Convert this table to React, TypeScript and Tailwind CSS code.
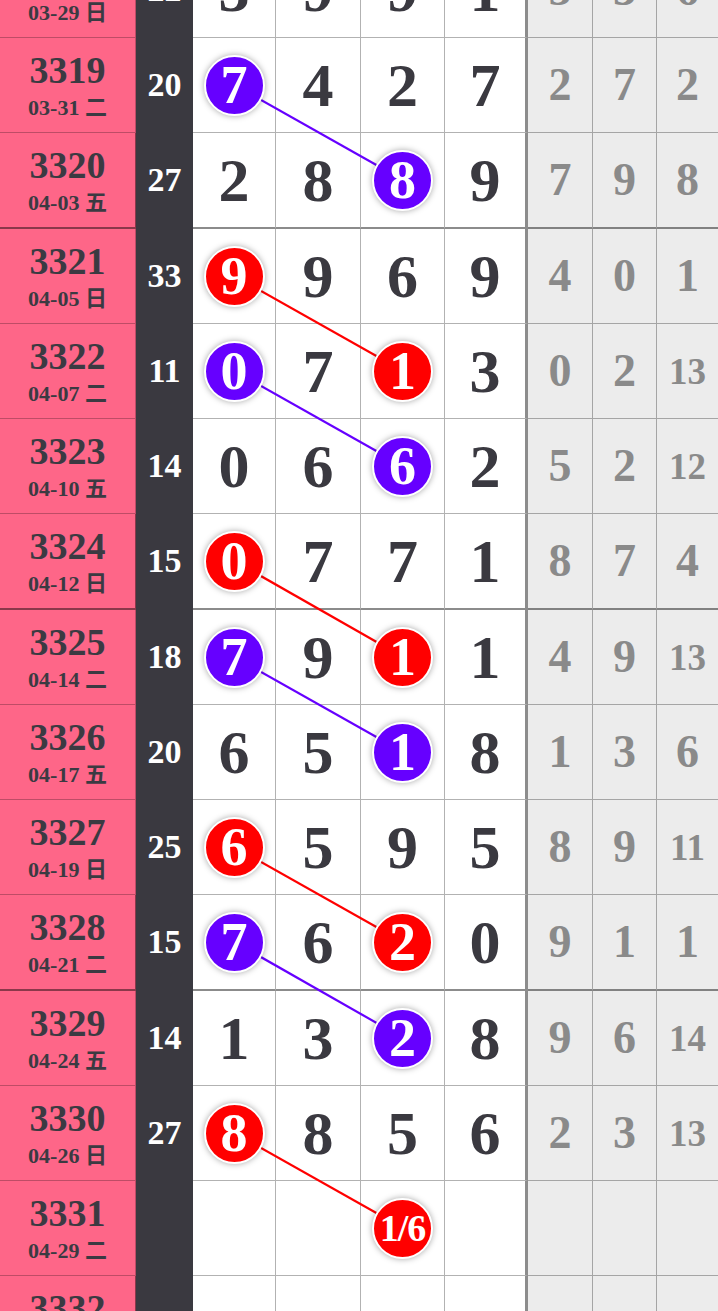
import React from 'react';

type Mark = { col: number; color: 'p' | 'r'; text?: string };
type Row = { no: string; date: string; sum: string; d: string[]; g: string[]; marks?: Mark[] };

const ROWS: Row[] = [
  { no: '3318', date: '03-29 日', sum: '22', d: ['3', '9', '9', '1'], g: ['5', '3', '6'] },
  { no: '3319', date: '03-31 二', sum: '20', d: ['7', '4', '2', '7'], g: ['2', '7', '2'], marks: [{ col: 0, color: 'p' }] },
  { no: '3320', date: '04-03 五', sum: '27', d: ['2', '8', '8', '9'], g: ['7', '9', '8'], marks: [{ col: 2, color: 'p' }] },
  { no: '3321', date: '04-05 日', sum: '33', d: ['9', '9', '6', '9'], g: ['4', '0', '1'], marks: [{ col: 0, color: 'r' }] },
  { no: '3322', date: '04-07 二', sum: '11', d: ['0', '7', '1', '3'], g: ['0', '2', '13'], marks: [{ col: 0, color: 'p' }, { col: 2, color: 'r' }] },
  { no: '3323', date: '04-10 五', sum: '14', d: ['0', '6', '6', '2'], g: ['5', '2', '12'], marks: [{ col: 2, color: 'p' }] },
  { no: '3324', date: '04-12 日', sum: '15', d: ['0', '7', '7', '1'], g: ['8', '7', '4'], marks: [{ col: 0, color: 'r' }] },
  { no: '3325', date: '04-14 二', sum: '18', d: ['7', '9', '1', '1'], g: ['4', '9', '13'], marks: [{ col: 0, color: 'p' }, { col: 2, color: 'r' }] },
  { no: '3326', date: '04-17 五', sum: '20', d: ['6', '5', '1', '8'], g: ['1', '3', '6'], marks: [{ col: 2, color: 'p' }] },
  { no: '3327', date: '04-19 日', sum: '25', d: ['6', '5', '9', '5'], g: ['8', '9', '11'], marks: [{ col: 0, color: 'r' }] },
  { no: '3328', date: '04-21 二', sum: '15', d: ['7', '6', '2', '0'], g: ['9', '1', '1'], marks: [{ col: 0, color: 'p' }, { col: 2, color: 'r' }] },
  { no: '3329', date: '04-24 五', sum: '14', d: ['1', '3', '2', '8'], g: ['9', '6', '14'], marks: [{ col: 2, color: 'p' }] },
  { no: '3330', date: '04-26 日', sum: '27', d: ['8', '8', '5', '6'], g: ['2', '3', '13'], marks: [{ col: 0, color: 'r' }] },
  { no: '3331', date: '04-29 二', sum: '', d: ['', '', '', ''], g: ['', '', ''], marks: [{ col: 2, color: 'r', text: '1/6' }] },
  { no: '3332', date: '05-01 五', sum: '', d: ['', '', '', ''], g: ['', '', ''] },
];

// links: circle in col 0 of one row to circle in col 2 of the next
const LINKS: { from: number; color: 'p' | 'r' }[] = [
  { from: 1, color: 'p' },
  { from: 3, color: 'r' },
  { from: 4, color: 'p' },
  { from: 6, color: 'r' },
  { from: 7, color: 'p' },
  { from: 9, color: 'r' },
  { from: 10, color: 'p' },
  { from: 12, color: 'r' },
];

const COL_X = [234.5, 318.5, 403, 486.5];
const isThick = (no: string) => (Number(no) - 3320) % 4 === 0;
const rowH = (no: string) => (isThick(no) ? 96 : 95);

const SERIF = { fontFamily: '"Liberation Serif", "Noto Sans CJK SC", serif' };

const Ball: React.FC<{ color: 'p' | 'r'; text: string }> = ({ color, text }) => (
  <div
    className={`relative z-10 w-[61px] h-[61px] rounded-full border-2 border-white shadow-[0_0_6px_rgba(0,0,0,0.35)] flex items-center justify-center text-white font-bold leading-none ${
      color === 'p' ? 'bg-[#6600ff]' : 'bg-[#ff0000]'
    } ${text.length > 1 ? 'text-[38px] tracking-[-1px]' : 'text-[54px]'}`}
  >
    {text}
  </div>
);

const App: React.FC = () => {
  const tops: number[] = [];
  let acc = 0;
  ROWS.forEach((r) => {
    tops.push(acc);
    acc += rowH(r.no);
  });
  const cy = (i: number) => tops[i] + (rowH(ROWS[i].no) - (isThick(ROWS[i].no) ? 2 : 1)) / 2;

  return (
    <div className="w-[718px] h-[1311px] overflow-hidden bg-white" style={SERIF}>
      <div className="relative mt-[-57px]">
        {ROWS.map((r) => {
          const thick = isThick(r.no);
          const bb = thick ? 'border-b-2' : 'border-b';
          return (
            <div
              key={r.no}
              className={`grid grid-cols-[136px_57px_83px_85px_84px_83px_65px_64px_61px] ${thick ? 'h-[96px]' : 'h-[95px]'}`}
            >
              {/* issue + date */}
              <div className={`bg-[#fe6688] border-r ${bb} ${thick ? 'border-black/45' : 'border-black/25'} flex flex-col items-center justify-center text-[#3b3a42] font-bold`}>
                <div className="text-[38px] leading-none">{r.no}</div>
                <div className="text-[22px] leading-none mt-[8px] whitespace-nowrap">{r.date}</div>
              </div>
              {/* sum */}
              <div className={`bg-[#3a3940] ${bb} border-[#3a3940] flex items-center justify-center text-white font-bold text-[34px] leading-none`}>
                {r.sum}
              </div>
              {/* digits */}
              {r.d.map((v, ci) => {
                const mark = r.marks?.find((m) => m.col === ci);
                return (
                  <div
                    key={ci}
                    className={`bg-white ${bb} ${thick ? 'border-b-black/45' : 'border-b-black/30'} ${
                      ci === 3 ? 'border-r-[3px] border-r-[#8c8c8c]' : 'border-r border-r-black/30'
                    } flex items-center justify-center text-[#3a3940] font-bold text-[62px] leading-none`}
                  >
                    {mark ? <Ball color={mark.color} text={mark.text ?? v} /> : v}
                  </div>
                );
              })}
              {/* gray stats */}
              {r.g.map((v, gi) => (
                <div
                  key={gi}
                  className={`bg-[#ececec] ${bb} ${thick ? 'border-b-black/45' : 'border-b-black/30'} ${
                    gi < 2 ? 'border-r border-r-black/30' : ''
                  } flex items-center justify-center text-[#8a8a8a] font-bold leading-none ${
                    v.length > 1 ? 'text-[37px]' : 'text-[46px]'
                  }`}
                >
                  {v}
                </div>
              ))}
            </div>
          );
        })}

        <svg className="absolute left-0 top-0 pointer-events-none" width={718} height={acc}>
          {LINKS.map((l, i) => (
            <line
              key={i}
              x1={COL_X[0]}
              y1={cy(l.from)}
              x2={COL_X[2]}
              y2={cy(l.from + 1)}
              stroke={l.color === 'p' ? '#6600ff' : '#ff0000'}
              strokeWidth={2.2}
            />
          ))}
        </svg>
      </div>
    </div>
  );
};

export default App;
